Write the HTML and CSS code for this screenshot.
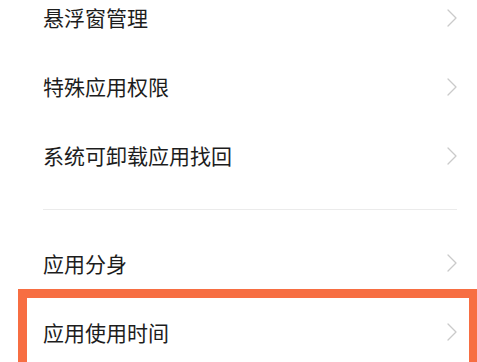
FILE: index.html
```html
<!DOCTYPE html>
<html lang="zh-CN">
<head>
<meta charset="utf-8">
<link rel="stylesheet" href="styles.css">
</head>
<body>
<div class="page">
  <div class="group first">
    <div class="row"><span class="label">悬浮窗管理</span><svg class="chev" viewBox="0 0 10 18" width="10" height="18"><polyline points="1,1 9,9 1,17"/></svg></div>
    <div class="row"><span class="label">特殊应用权限</span><svg class="chev" viewBox="0 0 10 18" width="10" height="18"><polyline points="1,1 9,9 1,17"/></svg></div>
    <div class="row"><span class="label">系统可卸载应用找回</span><svg class="chev" viewBox="0 0 10 18" width="10" height="18"><polyline points="1,1 9,9 1,17"/></svg></div>
  </div>
  <div class="divider"></div>
  <div class="row short"><span class="label">应用分身</span><svg class="chev" viewBox="0 0 10 18" width="10" height="18"><polyline points="1,1 9,9 1,17"/></svg></div>
  <div class="highlight">
    <div class="row inner"><span class="label">应用使用时间</span><svg class="chev" viewBox="0 0 10 18" width="10" height="18"><polyline points="1,1 9,9 1,17"/></svg></div>
  </div>
</div>
</body>
</html>
```

FILE: styles.css
```css
html, body {
  margin: 0;
  padding: 0;
  background: #ffffff;
}
body {
  width: 477px;
  height: 362px;
  overflow: hidden;
  font-family: "Noto Sans CJK SC", "Noto Sans", sans-serif;
  color: #1d1d1d;
}
.page {
  display: flex;
  flex-direction: column;
}
.group.first {
  margin-top: -17px;
  display: flex;
  flex-direction: column;
}
.row {
  height: 69px;
  display: flex;
  align-items: center;
  justify-content: space-between;
  padding: 0 20px 0 43px;
}
.label {
  font-size: 21px;
  line-height: 1;
  letter-spacing: 0;
}
.chev {
  display: block;
  fill: none;
  stroke: #cacaca;
  stroke-width: 1.3;
  stroke-linecap: round;
  stroke-linejoin: round;
}
.divider {
  margin: 19px 20px 0 43px;
  height: 1px;
  background: #ebebeb;
}
.row.short {
  margin-top: 27px;
  height: 52px;
}
.highlight {
  margin-left: 18px;
  border: 9px solid #f76e42;
  border-right-width: 8px;
}
.row.inner {
  height: 68px;
  padding: 0 12px 0 16px;
}
```
